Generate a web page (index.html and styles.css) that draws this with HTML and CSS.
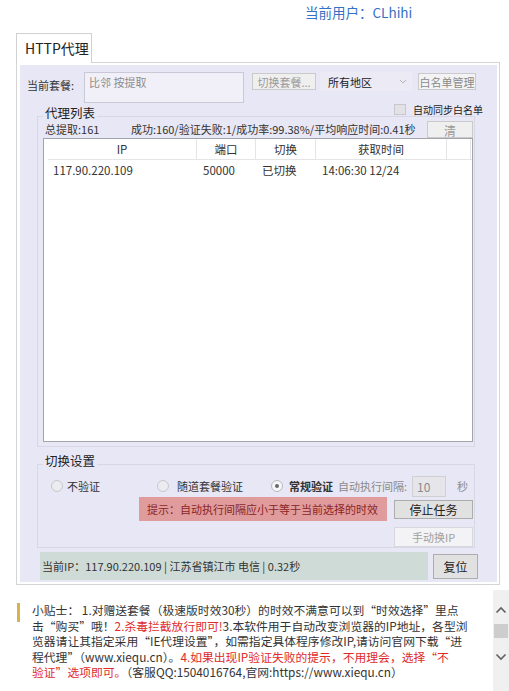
FILE: index.html
```html
<!DOCTYPE html>
<html lang="zh-CN">
<head>
    <meta charset="UTF-8">
    <meta name="viewport" content="width=device-width, initial-scale=1.0">
    <title>HTTP代理</title>
    <link rel="stylesheet" href="styles.css">
</head>
<body>
    <div class="user-bar">当前用户：CLhihi</div>

    <div class="tabs">
        <div class="tab">HTTP代理</div>
    </div>

    <div class="panel">
        <div class="panel-body">
            <div class="row-plan">
                <span class="plan-label">当前套餐:</span>
                <div class="plan-box">比邻 按提取</div>
                <button class="btn btn-off btn-switch">切换套餐...</button>
                <div class="select">
                    <span>所有地区</span>
                    <svg width="8" height="5" viewBox="0 0 8 5"><path d="M1 1l3 3 3-3" fill="none" stroke="#b4b4bc" stroke-width="1"/></svg>
                </div>
                <button class="btn btn-off btn-white">白名单管理</button>
            </div>

            <div class="row-sync">
                <span class="checkbox"></span>
                <span>自动同步白名单</span>
            </div>

            <fieldset class="group group-list">
                <legend>代理列表</legend>
                <div class="stats">
                    <span class="total">总提取:161</span>
                    <span class="rate">成功:160/验证失败:1/成功率:99.38%/平均响应时间:0.41秒</span>
                    <button class="btn btn-off btn-clear">清</button>
                </div>
                <div class="listview">
                    <div class="lv-head">
                        <div>IP</div>
                        <div>端口</div>
                        <div>切换</div>
                        <div>获取时间</div>
                        <div></div>
                    </div>
                    <div class="lv-row">
                        <div class="c-ip">117.90.220.109</div>
                        <div>50000</div>
                        <div>已切换</div>
                        <div>14:06:30 12/24</div>
                        <div></div>
                    </div>
                </div>
            </fieldset>

            <fieldset class="group group-switch">
                <legend>切换设置</legend>
                <div class="switch-row">
                    <span class="radio r1"></span>
                    <span class="opt opt1">不验证</span>
                    <span class="radio r2"></span>
                    <span class="opt opt2">随道套餐验证</span>
                    <span class="radio r3 checked"></span>
                    <span class="opt opt3">常规验证</span>
                    <span class="interval">自动执行间隔:</span>
                    <div class="num-box">10</div>
                    <span class="unit">秒</span>
                </div>
                <div class="hint-row">
                    <div class="hint">提示：自动执行间隔应小于等于当前选择的时效</div>
                    <button class="btn btn-stop">停止任务</button>
                </div>
                <div class="manual-row">
                    <button class="btn btn-off btn-manual">手动换IP</button>
                </div>
            </fieldset>

            <div class="status-row">
                <div class="status">当前IP：117.90.220.109 | 江苏省镇江市 电信 | 0.32秒</div>
                <button class="btn btn-reset">复位</button>
            </div>
        </div>
    </div>

    <div class="tips">
        <div class="tips-mark"></div>
        <div class="tips-text">
            小贴士： 1.对赠送套餐（极速版时效30秒）的时效不满意可以到“时效选择”里点<br>
            击“购买”哦！<span class="red">2.杀毒拦截放行即可!</span>3.本软件用于自动改变浏览器的IP地址，各型浏<br>
            览器请让其指定采用“IE代理设置”，如需指定具体程序修改IP,请访问官网下载“进<br>
            程代理”（www.xiequ.cn）。<span class="red">4.如果出现IP验证失败的提示，不用理会，选择“不<br>
            验证”选项即可。</span>（客服QQ:1504016764,官网:https://www.xiequ.cn）
        </div>
        <div class="scrollbar">
            <svg class="arrow-up" width="12" height="8" viewBox="0 0 12 8"><path d="M1.5 6.5l4.5-4.5 4.5 4.5" fill="none" stroke="#606060" stroke-width="1.6"/></svg>
            <div class="thumb"></div>
            <svg class="arrow-down" width="12" height="8" viewBox="0 0 12 8"><path d="M1.5 1.5l4.5 4.5 4.5-4.5" fill="none" stroke="#606060" stroke-width="1.6"/></svg>
        </div>
    </div>
</body>
</html>
```

FILE: styles.css
```css
/* 窗口整体 */
body {
    margin: 0;
    width: 509px;
    height: 691px;
    overflow: hidden;
    background-color: #ffffff;
    color: #333333;
    font-family: "Noto Sans CJK SC", "Microsoft YaHei", sans-serif;
    font-size: 11px;
}

.user-bar {
    padding: 4px 0 0 305px;
    font-size: 13.5px;
    line-height: 17px;
    color: #3470c4;
}

.tabs {
    display: flex;
    margin: 12px 0 0 16px;
}

.tab {
    position: relative;
    width: 76px;
    height: 30px;
    box-sizing: border-box;
    margin-bottom: -1px;
    padding-left: 8px;
    border: 1px solid #d0d0d0;
    border-bottom: none;
    background-color: #ffffff;
    font-size: 14px;
    line-height: 28px;
    color: #222222;
}

.panel {
    width: 484px;
    box-sizing: border-box;
    margin-left: 16px;
    padding: 2px 2px 2px 3px;
    border: 1px solid #d5d5d5;
    background-color: #ffffff;
}

.panel-body {
    padding: 7px 0 2px;
    background-color: #e8e7f5;
}

/* 按钮 */
.btn {
    box-sizing: border-box;
    padding: 0;
    border: 1px solid #adadad;
    background-color: #e1e1e1;
    font-family: inherit;
    font-size: 12px;
    color: #222222;
}

.btn-off {
    border-color: #cacaca;
    background-color: #efefef;
    color: #9a9a9a;
    font-size: 11px;
}

/* 套餐行 */
.row-plan {
    display: flex;
    align-items: flex-start;
    height: 31px;
    padding-left: 7px;
}

.plan-label {
    width: 57px;
    padding-top: 7px;
    line-height: 13px;
}

.plan-box {
    width: 160px;
    height: 31px;
    box-sizing: border-box;
    padding: 3px 4px;
    border: 1px solid #c9c8d6;
    background-color: #f1f0f8;
    color: #8c8c8c;
    line-height: 13px;
}

.btn-switch {
    width: 64px;
    height: 17px;
    margin: 1px 0 0 8px;
}

.select {
    display: flex;
    justify-content: space-between;
    align-items: center;
    width: 92px;
    height: 19px;
    box-sizing: border-box;
    margin-left: 4px;
    padding: 0 5px 0 8px;
    background-color: #ebeaf5;
    color: #222222;
}

.btn-white {
    width: 58px;
    height: 17px;
    margin: 1px 0 0 6px;
    background-color: #f3f3f6;
    color: #8a8a8a;
}

.row-sync {
    display: flex;
    justify-content: flex-end;
    align-items: center;
    height: 12px;
    padding-right: 14px;
    font-size: 10px;
    color: #222222;
}

.checkbox {
    width: 12px;
    height: 11px;
    box-sizing: border-box;
    margin-right: 7px;
    border: 1px solid #c8c8cc;
    background-color: #e2e2e6;
}

/* 分组框 */
.group {
    min-width: 0;
    margin: 0 22px 0 17px;
    padding: 0 1px 4px 5px;
    border: 1px solid #d8d7e6;
}

.group legend {
    padding: 0 2px 7px;
    font-size: 12.5px;
    line-height: 15px;
    color: #222222;
}

.group-list {
    margin-top: -10px;
}

.stats {
    display: flex;
    align-items: center;
    height: 17px;
    margin-top: -6px;
    line-height: 13px;
}

.total {
    width: 86px;
    margin-left: 2px;
}

.btn-clear {
    width: 46px;
    height: 17px;
    margin-left: auto;
    font-size: 12px;
}

.listview {
    height: 304px;
    box-sizing: border-box;
    padding-left: 4px;
    border: 1px solid #a3a3ab;
    background-color: #ffffff;
    font-size: 11.5px;
}

.lv-head,
.lv-row {
    display: grid;
    grid-template-columns: 149px 59px 60px 131px 24px;
    height: 20px;
    line-height: 20px;
}

.lv-head {
    border-bottom: 1px solid #e5e5e5;
}

.lv-head div {
    border-right: 1px solid #e5e5e5;
    text-align: center;
}

.lv-row div {
    padding-left: 6px;
}

.lv-row .c-ip {
    padding-left: 5px;
}

/* 切换设置 */
.group-switch {
    margin-top: 6px;
    padding-bottom: 0;
}

.switch-row {
    display: flex;
    align-items: center;
    height: 22px;
}

.radio {
    display: flex;
    justify-content: center;
    align-items: center;
    width: 12px;
    height: 12px;
    box-sizing: border-box;
    border: 1px solid #c6c6cc;
    border-radius: 50%;
    background-color: #ececf0;
}

.radio.checked {
    border-color: #b8b8be;
    background-color: #f6f6f8;
}

.radio.checked::after {
    content: "";
    width: 4px;
    height: 4px;
    border-radius: 50%;
    background-color: #6a6a6a;
}

.r1 { margin-left: 8px; }
.r2 { margin-left: 57px; }
.r3 { margin-left: 28px; }

.opt1 { margin-left: 4px; }
.opt2 { margin-left: 8px; }
.opt3 {
    margin-left: 6px;
    font-weight: bold;
    color: #333333;
}

.interval {
    margin-left: 5px;
    color: #8a8a8a;
}

.num-box {
    width: 34px;
    height: 21px;
    box-sizing: border-box;
    margin-left: 5px;
    padding-left: 4px;
    border: 1px solid #cfcfd4;
    background-color: #e6e6ea;
    color: #8a8a8a;
    font-size: 12px;
    line-height: 19px;
}

.unit {
    margin-left: 11px;
    color: #8a8a8a;
}

.hint-row {
    display: flex;
    align-items: center;
    height: 24px;
}

.hint {
    width: 248px;
    height: 24px;
    box-sizing: border-box;
    margin-left: 96px;
    padding-left: 8px;
    background-color: #e09c9c;
    color: #8b2525;
    line-height: 24px;
}

.btn-stop {
    width: 79px;
    height: 19px;
    margin-left: auto;
}

.manual-row {
    display: flex;
    justify-content: flex-end;
    height: 20px;
    margin-top: 6px;
}

.btn-manual {
    width: 79px;
    height: 20px;
    border-color: #d8d8dc;
    background-color: #f3f3f5;
    color: #a0a0a0;
}

.status-row {
    display: flex;
    align-items: center;
    height: 28px;
    margin-top: 4px;
}

.status {
    width: 388px;
    height: 28px;
    box-sizing: border-box;
    margin-left: 20px;
    padding-left: 2px;
    background-color: #cfdbd7;
    line-height: 28px;
}

.btn-reset {
    width: 45px;
    height: 25px;
    margin-left: 5px;
}

/* 小贴士 */
.tips {
    display: flex;
    height: 101px;
    margin-top: 5px;
}

.tips-mark {
    flex: none;
    width: 3px;
    height: 19px;
    margin: 13px 0 0 17px;
    background-color: #d8b24c;
}

.tips-text {
    width: 450px;
    padding-top: 2px;
    margin: 10px 0 0 12px;
    overflow: hidden;
    white-space: nowrap;
    font-size: 11.8px;
    line-height: 15.5px;
    color: #333333;
}

.red {
    color: #e02a2a;
}

.scrollbar {
    display: flex;
    flex-direction: column;
    align-items: center;
    width: 16px;
    margin-left: auto;
    background-color: #f0f0f0;
}

.arrow-up {
    margin-top: 16px;
}

.thumb {
    width: 14px;
    height: 14px;
    margin-top: 10px;
    background-color: #cdcdcd;
}

.arrow-down {
    margin-top: 15px;
}
```
